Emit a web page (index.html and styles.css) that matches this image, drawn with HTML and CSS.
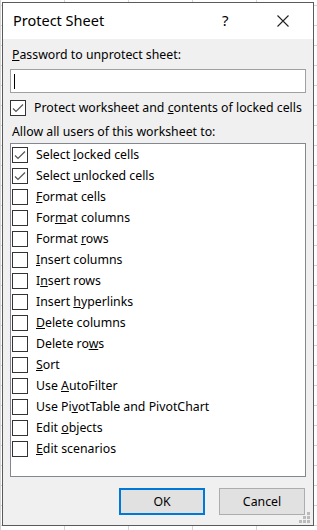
FILE: index.html
```
<!DOCTYPE html>
<html lang="en">
<head>
    <meta charset="UTF-8">
    <meta name="viewport" content="width=device-width, initial-scale=1.0">
    <title>Protect Sheet</title>
    <link rel="stylesheet" href="styles.css">
</head>
<body>
    <div class="dialog">
        <div class="titlebar">
            <span class="title">Protect Sheet</span>
            <span class="help">?</span>
            <span class="close">
                <svg width="12" height="12" viewBox="0 0 12 12">
                    <path d="M0.5 0.5 L11.5 11.5 M11.5 0.5 L0.5 11.5" stroke="#222" stroke-width="1.1" fill="none"/>
                </svg>
            </span>
        </div>
        <div class="content">
            <div class="label"><u>P</u>assword to unprotect sheet:</div>
            <div class="password"><span class="caret"></span></div>
            <div class="option top-option">
                <span class="box checked"></span>
                <span>Protect worksheet and <u>c</u>ontents of locked cells</span>
            </div>
            <div class="label allow">Allow all users of this worksheet to:</div>
            <div class="list">
                <div class="option"><span class="box checked"></span><span>Select <u>l</u>ocked cells</span></div>
                <div class="option"><span class="box checked"></span><span>Select <u>u</u>nlocked cells</span></div>
                <div class="option"><span class="box"></span><span><u>F</u>ormat cells</span></div>
                <div class="option"><span class="box"></span><span>For<u>m</u>at columns</span></div>
                <div class="option"><span class="box"></span><span>Format <u>r</u>ows</span></div>
                <div class="option"><span class="box"></span><span><u>I</u>nsert columns</span></div>
                <div class="option"><span class="box"></span><span>I<u>n</u>sert rows</span></div>
                <div class="option"><span class="box"></span><span>Insert <u>h</u>yperlinks</span></div>
                <div class="option"><span class="box"></span><span><u>D</u>elete columns</span></div>
                <div class="option"><span class="box"></span><span>Delete ro<u>w</u>s</span></div>
                <div class="option"><span class="box"></span><span><u>S</u>ort</span></div>
                <div class="option"><span class="box"></span><span>Use <u>A</u>utoFilter</span></div>
                <div class="option"><span class="box"></span><span>Use Pi<u>v</u>otTable and PivotChart</span></div>
                <div class="option"><span class="box"></span><span>Edit <u>o</u>bjects</span></div>
                <div class="option"><span class="box"></span><span><u>E</u>dit scenarios</span></div>
            </div>
            <div class="buttons">
                <button class="btn ok">OK</button>
                <button class="btn">Cancel</button>
            </div>
            <svg class="grip" width="12" height="12" viewBox="0 0 12 12">
                <rect x="8" y="0" width="3" height="3" fill="#bbb"/>
                <rect x="4" y="4" width="3" height="3" fill="#bbb"/>
                <rect x="8" y="4" width="3" height="3" fill="#bbb"/>
                <rect x="0" y="8" width="3" height="3" fill="#bbb"/>
                <rect x="4" y="8" width="3" height="3" fill="#bbb"/>
                <rect x="8" y="8" width="3" height="3" fill="#bbb"/>
            </svg>
        </div>
    </div>
</body>
</html>
```
FILE: styles.css
```
* {
    box-sizing: border-box;
}

body {
    margin: 0;
    width: 317px;
    height: 530px;
    overflow: hidden;
    font-family: "Noto Sans", "Open Sans", sans-serif;
    font-size: 12.3px;
    color: #000;
    background-color: #fff;
    background-image:
        linear-gradient(to right, #d4d4d4 1px, transparent 1px),
        linear-gradient(to bottom, #d4d4d4 1px, transparent 1px);
    background-size: 64px 100%, 100% 20px;
    background-position: 0 0, 0 5px;
    padding: 2px 3px 4px 2px;
}

.dialog {
    height: 524px;
    border: 1px solid #5a5a5a;
    background-color: #f0f0f0;
    display: flex;
    flex-direction: column;
}

.titlebar {
    height: 36px;
    background-color: #fff;
    display: flex;
    align-items: center;
    padding-left: 10px;
}

.title {
    font-size: 14.5px;
    flex: 1;
    padding-bottom: 2px;
}

.help {
    font-size: 15px;
    width: 20px;
    margin-right: 35px;
    padding-bottom: 2px;
}

.close {
    width: 12px;
    height: 12px;
    margin-right: 24px;
    display: flex;
}

.content {
    position: relative;
    flex: 1;
    padding: 8px 7px 0 7px;
}

.label {
    line-height: 16px;
    margin-left: 2px;
}

.password {
    margin-top: 6px;
    height: 24px;
    background-color: #fff;
    border: 1px solid #a0a0a0;
    padding: 4px 3px;
}

.caret {
    display: block;
    width: 1px;
    height: 15px;
    background-color: #000;
}

.option {
    display: flex;
    align-items: center;
    height: 21px;
    gap: 8px;
}

.top-option {
    margin-top: 4px;
    margin-bottom: 6px;
}

.box {
    width: 16px;
    height: 16px;
    border: 1px solid #333;
    background-color: #fff;
    flex-shrink: 0;
}

.box.checked {
    background-image: url("data:image/svg+xml,%3Csvg xmlns='http://www.w3.org/2000/svg' width='14' height='14' viewBox='0 0 14 14'%3E%3Cpath d='M2 7.5 L5 10.5 L12 3.5' stroke='%23555' stroke-width='1.2' fill='none'/%3E%3C/svg%3E");
    background-repeat: no-repeat;
}

.list {
    margin-top: 3px;
    height: 334px;
    background-color: #fff;
    border: 1px solid #828790;
    padding: 0 1px;
}

.buttons {
    display: flex;
    justify-content: flex-end;
    gap: 14px;
    margin-top: 11px;
    margin-right: 1px;
}

.btn {
    width: 86px;
    height: 27px;
    font-family: inherit;
    font-size: 12.3px;
    background-color: #e1e1e1;
    border: 1px solid #adadad;
    padding: 0;
}

.btn.ok {
    border: 2px solid #0078d7;
}

.grip {
    position: absolute;
    right: 2px;
    bottom: 1px;
}
```
